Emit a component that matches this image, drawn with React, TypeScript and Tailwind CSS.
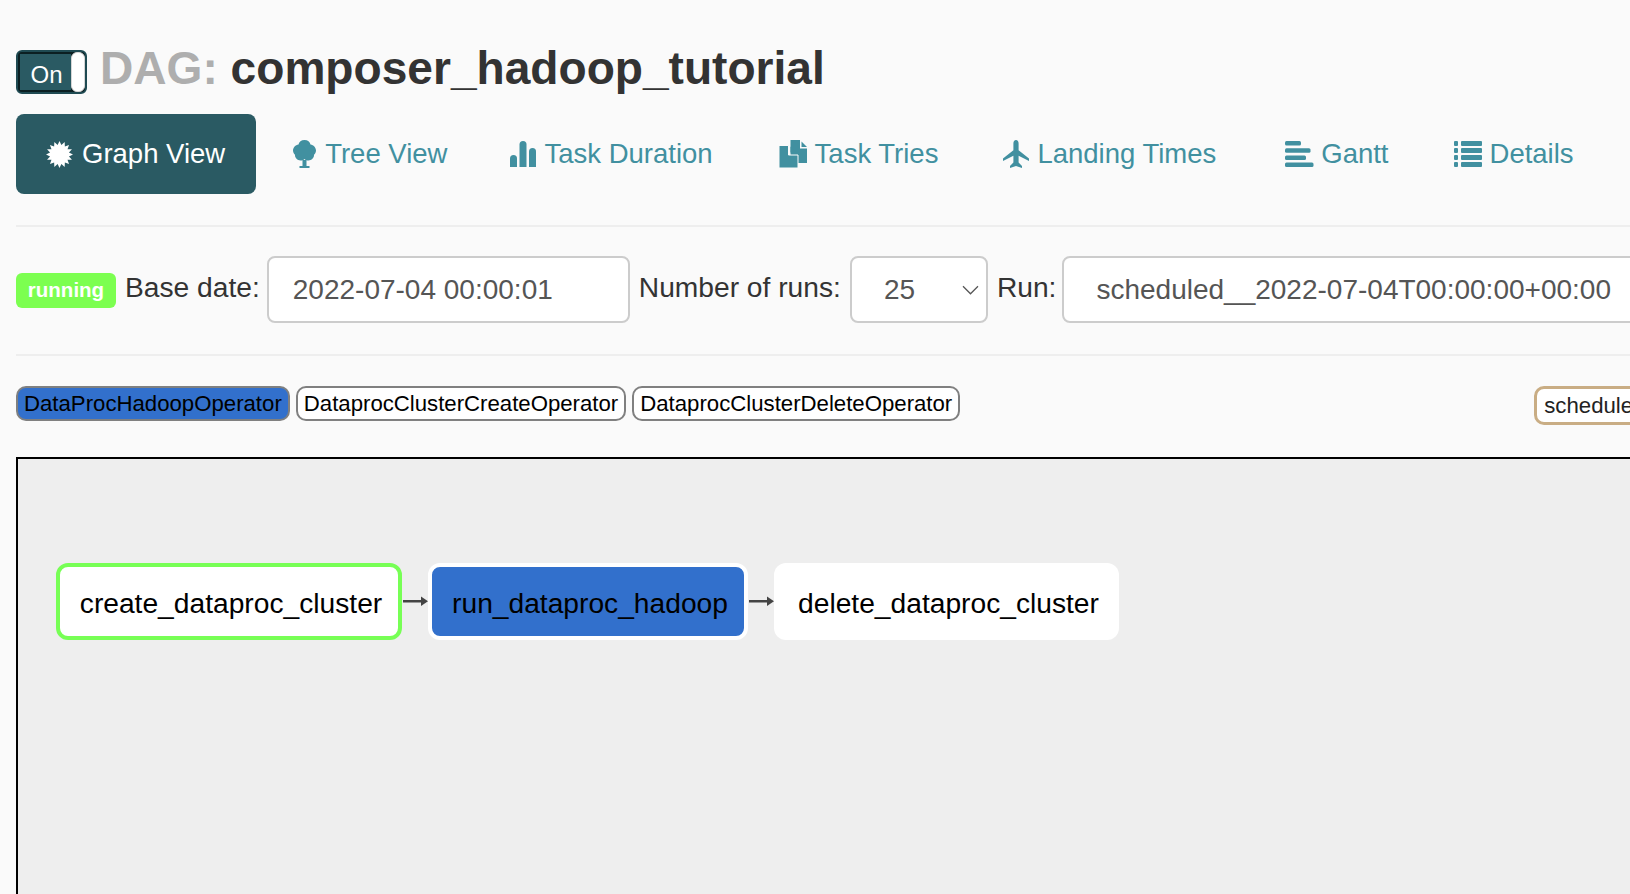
import React from "react";

const starPoints = Array.from({ length: 32 }, (_, i) => {
  const r = i % 2 === 0 ? 14 : 10;
  const a = (i * Math.PI) / 16;
  return `${(14 + r * Math.sin(a)).toFixed(2)},${(14 - r * Math.cos(a)).toFixed(2)}`;
}).join(" ");

function GraphIcon() {
  return (
    <svg viewBox="0 0 28 28" className="w-[27px] h-[27px] shrink-0" fill="currentColor">
      <polygon points={starPoints} />
    </svg>
  );
}

function TreeIcon() {
  return (
    <svg viewBox="0 0 23 28" className="w-[23px] h-[28px] shrink-0" fill="currentColor">
      <path d="M9.5 20h4v6h3v2h-10v-2h3z" />
      <path d="M11.5 0c3.2 0 5.6 2 6 4.600 3 .6 5.500 3 5.500 6 0 2-1 3.300-2 4.200.3 3-2.500 5.700-5.500 5.700-1.600 0-3-.5-4-1.500-1 1-2.400 1.500-4 1.500-3 0-5.800-2.700-5.500-5.700-1-.9-2-2.200-2-4.200 0-3 2.500-5.400 5.500-6C5.900 2 8.300 0 11.500 0z" />
    </svg>
  );
}

function StatsIcon() {
  return (
    <svg viewBox="0 0 26 26" className="w-[26px] h-[26px] shrink-0" fill="currentColor">
      <path d="M0 17.500a3.500 3.500 0 0 1 7 0V26H0z" />
      <path d="M9.500 3.500a3.500 3.500 0 0 1 7 0V26h-7z" />
      <path d="M19 10.500a3.500 3.500 0 0 1 7 0V26h-7z" />
    </svg>
  );
}

function DuplicateIcon() {
  return (
    <svg viewBox="0 0 28 28" className="w-[28px] h-[28px] shrink-0" fill="currentColor">
      <path d="M11.500 0h9.500v8.500H28V23H11.500z" />
      <path d="M22.500 1.500l5.500 5.500h-5.500z" />
      <path d="M0 5.500h9.500V15H19v13H0z" stroke="#fafafa" strokeWidth="1" />
      <path d="M11.500 6.500l6 6h-6z" />
    </svg>
  );
}

function PlaneIcon() {
  return (
    <svg viewBox="0 0 26 28" className="w-[26px] h-[28px] shrink-0" fill="currentColor">
      <path d="M13 0c1.600 0 2.600 1.500 2.600 3.500v6.700L26 18.500v2.500l-10.400-5.200v6.700l3.400 3.400V28l-6-2-6 2v-2.100l3.400-3.400v-6.700L0 21v-2.500l10.400-8.300V3.500C10.400 1.500 11.400 0 13 0z" />
    </svg>
  );
}

function GanttIcon() {
  return (
    <svg viewBox="0 0 29 26" className="w-[29px] h-[26px] shrink-0" fill="currentColor">
      <rect x="0" y="0" width="16" height="4.500" rx="1.500" />
      <rect x="0" y="7.200" width="25.500" height="4.500" rx="1.500" />
      <rect x="0" y="14.400" width="21" height="4.500" rx="1.500" />
      <rect x="0" y="21.500" width="28.500" height="4.500" rx="1.500" />
    </svg>
  );
}

function ListIcon() {
  return (
    <svg viewBox="0 0 28 26" className="w-[28px] h-[26px] shrink-0" fill="currentColor">
      <rect x="0" y="0" width="4" height="5" rx="1" />
      <rect x="7" y="0" width="21" height="5" rx="1" />
      <rect x="0" y="7" width="4" height="5" rx="1" />
      <rect x="7" y="7" width="21" height="5" rx="1" />
      <rect x="0" y="14" width="4" height="5" rx="1" />
      <rect x="7" y="14" width="21" height="5" rx="1" />
      <rect x="0" y="21" width="4" height="5" rx="1" />
      <rect x="7" y="21" width="21" height="5" rx="1" />
    </svg>
  );
}

function Arrow() {
  return (
    <svg viewBox="0 0 26 14" className="w-[26px] h-[14px] shrink-0 self-start mt-[31px] text-[#444444]" fill="currentColor">
      <rect x="1" y="6" width="21" height="2.500" />
      <path d="M19 2.500l7 4.700-7 4.700z" />
    </svg>
  );
}

const tabs = [
  { label: "Tree View", icon: <TreeIcon />, className: "gap-[9px]" },
  { label: "Task Duration", icon: <StatsIcon />, className: "gap-2 -ml-1" },
  { label: "Task Tries", icon: <DuplicateIcon />, className: "gap-2 -ml-[1px]" },
  { label: "Landing Times", icon: <PlaneIcon />, className: "gap-2 -ml-[2px]" },
  { label: "Gantt", icon: <GanttIcon />, className: "gap-[7px] ml-[2px]" },
  { label: "Details", icon: <ListIcon />, className: "gap-2 -ml-[2px]" },
];

export default function App() {
  return (
    <div className="w-[1630px] h-[894px] overflow-hidden bg-[#fafafa] pl-4 pt-[50px] text-[#333333] font-['Liberation_Sans',Arial,sans-serif]">
      <div className="w-[1700px]">
        {/* Title */}
        <div className="flex items-center h-[44px]">
          <div className="flex w-[71px] h-[44px] rounded-md border-2 border-[#1f4a52] bg-[#0b1f22] pl-[2px] py-[2px] shrink-0">
            <div className="flex-1 bg-[#2a5a63] text-white text-[24px] flex items-center justify-center pl-[2px] pt-[5px]">On</div>
            <div className="w-[14px] bg-white rounded-[6px] border border-[#d5d5d5] my-[-2px]"></div>
          </div>
          <h1 className="ml-[13px] pb-2 text-[46.1px] font-bold leading-none whitespace-nowrap">
            <span className="text-[#aeaeae]">DAG: </span>composer_hadoop_tutorial
          </h1>
        </div>

        {/* Tabs */}
        <div className="flex items-center gap-[7px] mt-5 h-[80px] text-[27.5px] whitespace-nowrap">
          <a className="flex items-center gap-[9px] h-[80px] px-[30px] pr-[31px] rounded-lg bg-[#2a5a63] text-white">
            <GraphIcon />
            Graph View
          </a>
          {tabs.map((tab) => (
            <a key={tab.label} className={`flex items-center h-[80px] px-[30px] text-[#4190a0] ${tab.className}`}>
              {tab.icon}
              {tab.label}
            </a>
          ))}
        </div>
        <div className="mt-[31px] h-[2px] bg-[#eeeeee]"></div>

        {/* Run controls */}
        <div className="flex items-center gap-[9px] mt-[29px] h-[67px] text-[28.2px] whitespace-nowrap">
          <span className="flex items-center justify-center w-[100px] h-[35px] rounded-md bg-[#7cff50] text-white font-bold text-[20.5px] shrink-0 -mb-[1px]">running</span>
          <span className="pb-[4px]">Base date:</span>
          <div className="flex items-center w-[363px] h-[67px] -ml-[2px] pl-6 pt-[1px] rounded-lg border-2 border-[#cccccc] bg-white text-[28px] text-[#555555] shrink-0">
            2022-07-04 00:00:01
          </div>
          <span className="pb-[4px]">Number of runs:</span>
          <div className="flex items-center justify-between w-[138px] h-[67px] pl-[32px] pt-[1px] pr-[6px] rounded-lg border-2 border-[#cccccc] bg-white text-[28px] text-[#555555] shrink-0">
            25
            <svg viewBox="0 0 14 8" className="w-[19px] h-[10px]" fill="none" stroke="#555555" strokeWidth="1">
              <path d="M1 1l6 6 6-6" />
            </svg>
          </div>
          <span className="pb-[4px]">Run:</span>
          <div className="flex items-center w-[700px] h-[67px] -ml-[3px] pl-[32px] pt-[1px] rounded-lg border-2 border-[#cccccc] bg-white text-[28px] text-[#555555] shrink-0">
            scheduled__2022-07-04T00:00:00+00:00
          </div>
        </div>
        <div className="mt-[31px] h-[2px] bg-[#eeeeee]"></div>

        {/* Operator legend */}
        <div className="flex items-start gap-[6px] mt-[30px] h-[39px] text-[22.2px] text-black whitespace-nowrap">
          <span className="h-[35px] px-[6px] flex items-center rounded-[10px] border-2 border-[#808080] bg-[#3270cc]">DataProcHadoopOperator</span>
          <span className="h-[35px] px-[6px] flex items-center rounded-[10px] border-2 border-[#808080] bg-white">DataprocClusterCreateOperator</span>
          <span className="h-[35px] px-[6px] flex items-center rounded-[10px] border-2 border-[#808080] bg-white">DataprocClusterDeleteOperator</span>
          <span className="ml-[568px] h-[39px] px-[7px] flex items-center rounded-[10px] border-[3px] border-[#c9ad84] bg-white text-[#222222]">scheduled</span>
        </div>

        {/* Graph canvas */}
        <div className="mt-8 h-[500px] border-2 border-black bg-[#eeeeee] pt-[104px] pl-[38px] text-[28.2px] text-black whitespace-nowrap">
          <div className="flex items-start">
            <div className="flex items-center justify-center w-[346px] h-[77px] pt-[4px] pl-[4px] rounded-xl border-4 border-[#77ff55] bg-white">create_dataproc_cluster</div>
            <Arrow />
            <div className="flex items-center justify-center w-[320px] h-[77px] pt-[4px] pl-[4px] rounded-xl border-4 border-white bg-[#3270cc]">run_dataproc_hadoop</div>
            <Arrow />
            <div className="flex items-center justify-center w-[345px] h-[77px] pt-[4px] pl-[4px] rounded-xl bg-white">delete_dataproc_cluster</div>
          </div>
        </div>
      </div>
    </div>
  );
}
